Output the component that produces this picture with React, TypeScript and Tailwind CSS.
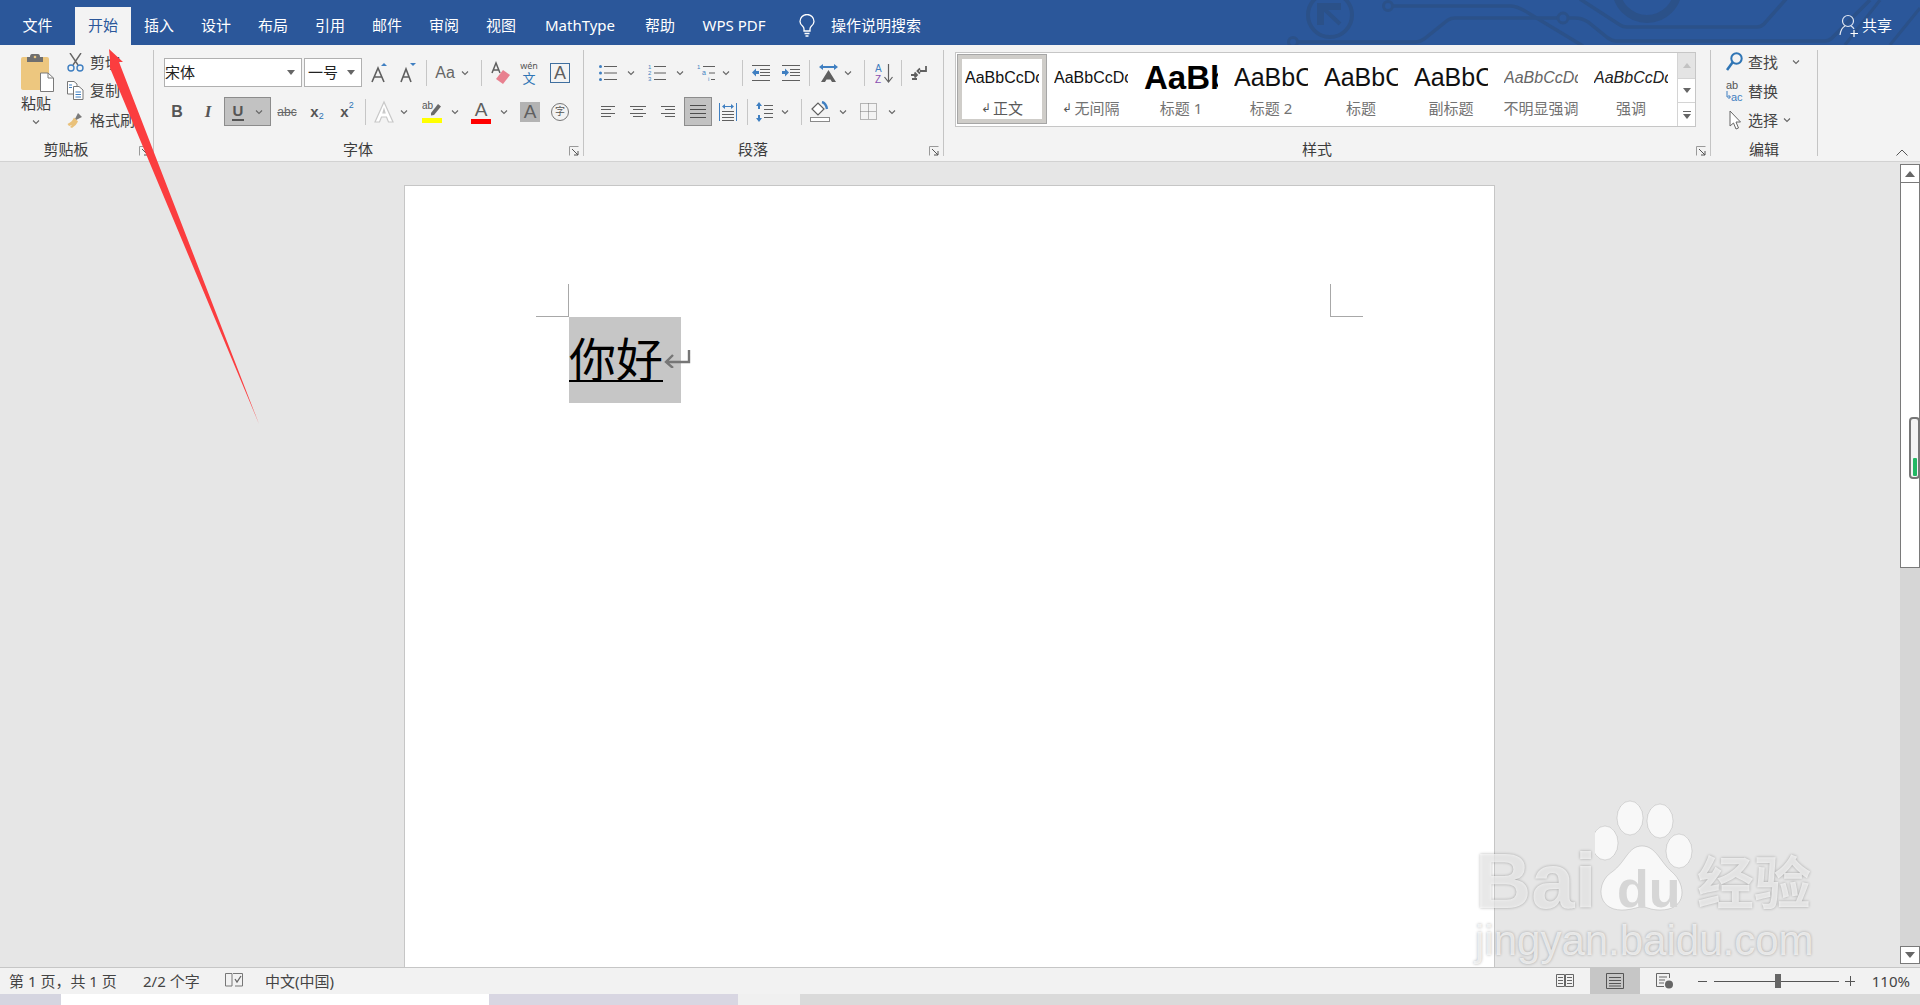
import React from "react";

const G = "#5f5f5f";
const B = "#3f7fc1";

function Chev({ className = "" }: { className?: string }) {
  return (
    <svg width="8" height="6" viewBox="0 0 8 6" className={"shrink-0 " + className}>
      <path d="M1 1.5 L4 4.5 L7 1.5" fill="none" stroke="#666" strokeWidth="1.1" />
    </svg>
  );
}
function Sep({ className = "" }: { className?: string }) {
  return <div className={"w-px h-[26px] bg-[#c6c6c6] shrink-0 " + className} />;
}
function Launcher() {
  return (
    <svg width="10" height="10" viewBox="0 0 10 10" className="absolute right-[4px] top-[7px]">
      <path d="M0.5 9.5 V0.5 H9.5" fill="none" stroke="#9a9a9a" />
      <path d="M3 3 L9 9 M9 5 V9 H5" fill="none" stroke="#555" />
    </svg>
  );
}

function Group({ w, label, labelCls = "pr-[21px]", launcher = true, children }: { w: string; label: string; labelCls?: string; launcher?: boolean; children: React.ReactNode }) {
  return (
    <div className={"mt-[5px] h-[106px] border-r border-[#c4c4c4] flex flex-col shrink-0 " + w}>
      <div className="h-[89px] shrink-0">{children}</div>
      <div className={"relative h-[20px] shrink-0 flex justify-center items-center text-[15px] leading-[20px] text-[#3c3c3c] " + labelCls}>
        {label}
        {launcher && <Launcher />}
      </div>
    </div>
  );
}

function Row({ className = "", children }: { className?: string; children: React.ReactNode }) {
  return <div className={"h-[29px] flex items-center " + className}>{children}</div>;
}

function Lines({ w, ys, x0 = 0, color = G }: { w: number; ys: [number, number, number][]; x0?: number; color?: string }) {
  return (
    <>
      {ys.map(([y, a, b], i) => (
        <path key={i} d={`M${a + x0} ${y + 0.5} H${b + x0}`} stroke={color} strokeWidth="1" fill="none" />
      ))}
    </>
  );
}

function BigA({ size = 22, color = G }: { size?: number; color?: string }) {
  return <span className="font-['Liberation_Sans'] leading-none" style={{ fontSize: size, color }}>A</span>;
}

function StyleItem({ text, cls, label, mark, selected }: { text: string; cls: string; label: string; mark?: boolean; selected?: boolean }) {
  const inner = (
    <div className="h-full flex flex-col items-center">
      <div className="h-[38px] w-[74px] overflow-hidden flex items-center whitespace-nowrap">
        <span className={"font-['Liberation_Sans'] " + cls}>{text}</span>
      </div>
      <div className={"h-[22px] text-[15px] leading-[22px] whitespace-nowrap flex items-center " + (selected ? "text-[#5a5a5a]" : "text-[#737373]")}>
        {mark && <span className="text-[12px] mr-[2px] text-[#555]">↲</span>}
        {label}
      </div>
    </div>
  );
  if (selected) {
    return (
      <div className="w-[90px] h-[70px] mt-[1px] ml-[1px] mr-[-1px] shrink-0 border border-[#a6a6a6] bg-[#cfcdc9] p-[4px]">
        <div className="bg-white h-full">{inner}</div>
      </div>
    );
  }
  return <div className="w-[90px] h-[70px] mt-[1px] pt-[5px] shrink-0">{inner}</div>;
}

export default function App() {
  return (
    <div className="relative w-[1920px] h-[1005px] overflow-hidden flex flex-col bg-[#e6e6e6] text-[#444] [font-family:'Noto_Sans','Noto_Sans_CJK_SC',sans-serif]">
      {/* title bar */}
      <div className="relative h-[45px] shrink-0 bg-[#2b579a] flex text-white text-[15px]">
        <svg className="absolute left-0 top-0" width="1920" height="45" viewBox="0 0 1920 45" fill="none" stroke="#2b5189">
          <circle cx="1330" cy="15" r="22" strokeWidth="4" />
          <path d="M1319 23 V5 H1339 V8 H1322 V23 Z M1322 7 L1340 24" strokeWidth="4" />
          <circle cx="1388" cy="6" r="4.5" strokeWidth="3" />
          <path d="M1392 6 H1510 Q1518 6 1530 14 L1583 46" strokeWidth="3.5" />
          <circle cx="1293" cy="42" r="4.5" strokeWidth="3" />
          <path d="M1297 42 H1416 Q1420 42 1424 39 L1448 20 Q1451 18 1455 18 H1558" strokeWidth="3.5" />
          <circle cx="1563" cy="18" r="5" strokeWidth="3" />
          <path d="M1568 18 H1575 Q1582 18 1588 22 L1608 38 Q1612 41 1616 41 H1825 Q1829 41 1832 38 L1870 0" strokeWidth="3.5" />
          <path d="M1580 -1 L1620 25 Q1623 27 1627 27 H1757 Q1761 27 1764 24 L1786 -1" strokeWidth="3.5" />
          <circle cx="1647" cy="-12" r="31" strokeWidth="8" />
          <path d="M1880 0 L1845 45 M1920 8 L1890 45" strokeWidth="3" />
        </svg>
        <div className="relative flex w-full items-stretch">
          <div className="w-[75px] pt-[5px] flex items-center justify-center">文件</div>
          <div className="w-[56px] mt-[7px] pb-[2px] bg-[#f3f3f3] text-[#2b579a] flex items-center justify-center">开始</div>
          <div className="w-[56px] pt-[5px] flex items-center justify-center">插入</div>
          <div className="w-[58px] pt-[5px] flex items-center justify-center">设计</div>
          <div className="w-[56px] pt-[5px] flex items-center justify-center">布局</div>
          <div className="w-[58px] pt-[5px] flex items-center justify-center">引用</div>
          <div className="w-[56px] pt-[5px] flex items-center justify-center">邮件</div>
          <div className="w-[58px] pt-[5px] flex items-center justify-center">审阅</div>
          <div className="w-[56px] pt-[5px] flex items-center justify-center">视图</div>
          <div className="w-[102px] pt-[5px] flex items-center justify-center">MathType</div>
          <div className="w-[58px] pt-[5px] flex items-center justify-center">帮助</div>
          <div className="w-[90px] pt-[5px] flex items-center justify-center">WPS PDF</div>
          <div className="ml-[20px] pt-[7px] flex items-center">
            <svg width="16" height="24" viewBox="0 0 16 24" fill="none" stroke="#fff" strokeWidth="1.3">
              <path d="M5 17 V15 Q5 13.5 3.5 12 Q1 9.8 1 7.5 A7 7 0 0 1 15 7.5 Q15 9.8 12.5 12 Q11 13.5 11 15 V17 Z" />
              <path d="M5.5 19.5 H10.5 M6.5 22 H9.5" />
            </svg>
          </div>
          <div className="ml-[16px] pt-[5px] flex items-center">操作说明搜索</div>
          <div className="flex-1 pt-[5px] pr-[28px] flex items-center justify-end">
            <svg width="20" height="24" viewBox="0 0 20 24" fill="none" stroke="#dfe6f2" strokeWidth="1.2" className="mr-[3px]">
              <circle cx="9" cy="8" r="5.5" />
              <path d="M1 22 Q2 15 6 13 M12 13 Q14 14 15 16" />
              <path d="M15 17 V24 M11.5 20.5 H19" stroke="#fff" />
            </svg>
            共享
          </div>
        </div>
      </div>

      {/* ribbon */}
      <div className="h-[117px] shrink-0 bg-[#f3f3f3] border-b border-[#d2d2d2] flex">
        {/* clipboard */}
        <Group w="w-[154px]" label="剪贴板">
          <div className="flex">
            <div className="ml-[21px] w-[30px] flex flex-col items-start pt-[3px]">
              <svg width="33" height="39" viewBox="0 0 33 39" className="shrink-0">
                <rect x="0" y="4" width="28" height="33" rx="2" fill="#edc77f" />
                <path d="M9 4 Q9 1 11 1 H17 Q19 1 19 4 H22 V9 H6 V4 Z" fill="#6f6f6f" />
                <circle cx="14" cy="4" r="1.3" fill="#edc77f" />
                <path d="M19.5 20 H27 L32.5 25 V38.5 H19.5 Z" fill="#fff" stroke="#7a7a7a" />
                <path d="M27 20 V25 H32.5" fill="none" stroke="#7a7a7a" />
              </svg>
              <div className="mt-[1px] h-[20px] leading-[20px] text-[15px] text-[#3c3c3c] whitespace-nowrap">粘贴</div>
              <Chev className="ml-[11px] mt-[6px]" />
            </div>
            <div className="ml-[16px] flex flex-col text-[15px] text-[#444] whitespace-nowrap">
              <div className="h-[24px] flex items-center">
                <svg width="17" height="19" viewBox="0 0 17 19" fill="none">
                  <path d="M3 0 L11 12 M14 0 L6 12" stroke="#666" strokeWidth="1.4" />
                  <circle cx="4" cy="15" r="3" stroke={B} strokeWidth="1.4" />
                  <circle cx="13" cy="15" r="3" stroke={B} strokeWidth="1.4" />
                </svg>
                <span className="ml-[6px]">剪切</span>
              </div>
              <div className="h-[24px] mt-[4px] flex items-center">
                <svg width="17" height="19" viewBox="0 0 17 19" fill="none" stroke="#777">
                  <path d="M0.5 0.5 H7 L10 3 V13 H0.5 Z" fill="#fff" />
                  <path d="M6.5 5.5 H12 L16 9 V18.5 H6.5 Z" fill="#fff" />
                  <path d="M8.5 11 H14 M8.5 13.5 H14 M8.5 16 H14 M2 4 H5 M2 6.5 H5" stroke={B} />
                </svg>
                <span className="ml-[6px]">复制</span>
              </div>
              <div className="h-[24px] mt-[6px] flex items-center">
                <svg width="17" height="17" viewBox="0 0 17 17">
                  <path d="M11 1 L15 5 L9 8 L8 7 Z" fill="#7a7a7a" />
                  <path d="M7 5.5 L11 9.5 Q9 14 5 16 L3 15 L5 13 L2 14 L0.5 12 Q5 10 7 5.5 Z" fill="#e9c17a" />
                </svg>
                <span className="ml-[6px]">格式刷</span>
              </div>
            </div>
          </div>
        </Group>

        {/* font */}
        <Group w="w-[430px]" label="字体">
          <div className="pt-[8px] pl-[10px]">
            <Row>
              <div className="w-[138px] h-[29px] shrink-0 bg-white border border-[#b0b0b0] flex items-center justify-between pr-[6px] text-[15px] text-[#222]">
                宋体
                <svg width="8" height="5" viewBox="0 0 8 5"><path d="M0 0 H8 L4 5 Z" fill="#666" /></svg>
              </div>
              <div className="ml-[2px] w-[58px] h-[29px] shrink-0 bg-white border border-[#b0b0b0] flex items-center justify-between pl-[3px] pr-[6px] text-[15px] text-[#222]">
                一号
                <svg width="8" height="5" viewBox="0 0 8 5"><path d="M0 0 H8 L4 5 Z" fill="#666" /></svg>
              </div>
              <svg width="20" height="22" viewBox="0 0 20 22" className="ml-[7px] shrink-0">
                <path d="M3 20 L9 6 L15 20 M5.5 15 H12.5" fill="none" stroke={G} strokeWidth="1.6" />
                <path d="M12 4 L15 1 L18 4 Z" fill={B} />
              </svg>
              <svg width="20" height="22" viewBox="0 0 20 22" className="ml-[9px] shrink-0">
                <path d="M3 20 L8 7 L13 20 M5 15 H11" fill="none" stroke={G} strokeWidth="1.6" />
                <path d="M12 1 L18 1 L15 4 Z" fill={B} />
              </svg>
              <Sep className="ml-[8px]" />
              <span className="ml-[7px] w-[22px] text-center font-['Liberation_Sans'] text-[16px] text-[#666] shrink-0">Aa</span>
              <Chev className="ml-[5px]" />
              <Sep className="ml-[12px]" />
              <svg width="20" height="24" viewBox="0 0 20 24" className="ml-[9px] shrink-0">
                <path d="M1 12 L5 2 L9 12 M2.5 9 H7.5" fill="none" stroke={G} strokeWidth="1.5" />
                <path d="M12 9 L19 14 L12 23 L5 18 Z" fill="#e8808f" />
              </svg>
              <div className="ml-[10px] w-[16px] h-[24px] flex flex-col items-center shrink-0 leading-none">
                <span className="text-[9px] text-[#555] h-[10px]">wén</span>
                <span className="text-[13px] text-[#2f75b5] mt-[1px]">文</span>
              </div>
              <div className="ml-[13px] w-[20px] h-[20px] shrink-0 border border-[#3f6f9f] flex items-center justify-center">
                <BigA size={18} />
              </div>
            </Row>
            <Row className="mt-[10px]">
              <span className="ml-[6px] w-[14px] text-center font-['Liberation_Sans'] font-bold text-[16px] text-[#555] shrink-0">B</span>
              <span className="ml-[17px] w-[14px] text-center font-['Liberation_Serif'] font-bold italic text-[17px] text-[#555] shrink-0">I</span>
              <div className="ml-[9px] w-[47px] h-[29px] shrink-0 bg-[#c2c2c2] border border-[#8c8c8c] flex items-center">
                <span className="ml-[7px] w-[12px] text-center font-['Liberation_Sans'] font-bold text-[15px] leading-[17px] text-[#555] border-b-2 border-[#555]">U</span>
                <Chev className="ml-[11px]" />
              </div>
              <span className="ml-[6px] w-[20px] text-center font-['Liberation_Sans'] text-[12px] text-[#666] line-through shrink-0">abc</span>
              <div className="ml-[10px] w-[20px] shrink-0 flex items-end justify-center font-['Liberation_Sans'] font-bold text-[15px] text-[#555] leading-none">
                x<span className="text-[9px] font-normal text-[#2f75b5] translate-y-[2px]">2</span>
              </div>
              <div className="ml-[10px] w-[20px] shrink-0 flex items-start justify-center font-['Liberation_Sans'] font-bold text-[15px] text-[#555] leading-none">
                x<span className="text-[9px] font-normal text-[#2f75b5] -translate-y-[3px]">2</span>
              </div>
              <Sep className="ml-[8px]" />
              <svg width="22" height="24" viewBox="0 0 22 24" className="ml-[7px] shrink-0">
                <path d="M2 22 L11 2 L20 22 H15.5 L13.5 17 H8.5 L6.5 22 Z M10 13 H12 L11 9.5 Z" fill="#fff" stroke="#c8c8c8" strokeWidth="1.2" />
              </svg>
              <Chev className="ml-[5px]" />
              <svg width="20" height="24" viewBox="0 0 20 24" className="ml-[14px] shrink-0">
                <path d="M9 13 L16 4 L19 6.5 L12 15 L9 15.5 Z" fill="#6a6a6a" />
                <text x="0" y="9" fontSize="10" fill="#555" fontFamily="Liberation Sans">ab</text>
                <rect x="0" y="18" width="20" height="5" fill="#ffff00" />
              </svg>
              <Chev className="ml-[9px]" />
              <div className="ml-[12px] w-[20px] h-[24px] shrink-0 flex flex-col items-center justify-end">
                <BigA size={19} />
                <div className="w-[20px] h-[5px] bg-[#ff0000] shrink-0" />
              </div>
              <Chev className="ml-[9px]" />
              <div className="ml-[12px] w-[20px] h-[20px] shrink-0 bg-[#b3b3b3] flex items-center justify-center">
                <BigA size={19} />
              </div>
              <div className="ml-[11px] w-[18px] h-[18px] shrink-0 rounded-full border border-[#777] flex items-center justify-center text-[10px] text-[#555]">字</div>
            </Row>
          </div>
        </Group>

        {/* paragraph */}
        <Group w="w-[360px]" label="段落">
          <div className="pt-[8px]">
            <Row>
              <svg width="18" height="18" viewBox="0 0 18 18" className="ml-[15px] shrink-0">
                <circle cx="1.5" cy="2.5" r="1.5" fill={B} /><circle cx="1.5" cy="9" r="1.5" fill={B} /><circle cx="1.5" cy="15.5" r="1.5" fill={B} />
                <path d="M5 2.5 H18 M5 9 H18 M5 15.5 H18" stroke={G} />
              </svg>
              <Chev className="ml-[10px]" />
              <svg width="18" height="18" viewBox="0 0 18 18" className="ml-[13px] shrink-0">
                <text x="0" y="5" fontSize="6" fill={B} fontFamily="Liberation Sans">1</text>
                <text x="0" y="11" fontSize="6" fill={B} fontFamily="Liberation Sans">2</text>
                <text x="0" y="17" fontSize="6" fill={B} fontFamily="Liberation Sans">3</text>
                <path d="M6 2.5 H18 M6 9 H18 M6 15.5 H18" stroke={G} />
              </svg>
              <Chev className="ml-[10px]" />
              <svg width="18" height="18" viewBox="0 0 18 18" className="ml-[13px] shrink-0">
                <text x="0" y="5" fontSize="6" fill={B} fontFamily="Liberation Sans">1</text>
                <text x="5" y="11" fontSize="7" fill={B} fontFamily="Liberation Sans">a</text>
                <text x="11" y="17" fontSize="6" fill={B} fontFamily="Liberation Sans">i</text>
                <path d="M6 2.5 H18 M12 9 H18 M14 15.5 H18" stroke={G} />
              </svg>
              <Chev className="ml-[7px]" />
              <Sep className="ml-[12px]" />
              <svg width="18" height="18" viewBox="0 0 18 18" className="ml-[9px] shrink-0">
                <Lines w={18} ys={[[1, 0, 18], [5, 8, 18], [8, 8, 18], [11, 8, 18], [16, 0, 18]]} />
                <path d="M0 8.5 L4 4.5 V7 H7 V10 H4 V12.5 Z" fill={B} />
              </svg>
              <svg width="18" height="18" viewBox="0 0 18 18" className="ml-[12px] shrink-0">
                <Lines w={18} ys={[[1, 0, 18], [5, 8, 18], [8, 8, 18], [11, 8, 18], [16, 0, 18]]} />
                <path d="M7 8.5 L3 4.5 V7 H0 V10 H3 V12.5 Z" fill={B} />
              </svg>
              <Sep className="ml-[9px]" />
              <svg width="19" height="20" viewBox="0 0 19 20" className="ml-[9px] shrink-0">
                <path d="M0 4 L4 1 V3 H15 V1 L19 4 L15 7 V5 H4 V7 Z" fill={B} />
                <path d="M2 19 L9.5 7 L17 19 H13 L11.5 16.5 H7.5 L6 19 Z" fill={G} />
              </svg>
              <Chev className="ml-[6px]" />
              <Sep className="ml-[12px]" />
              <div className="ml-[10px] w-[18px] h-[22px] shrink-0">
                <svg width="18" height="22" viewBox="0 0 18 22">
                  <text x="0" y="10" fontSize="10" fill={B} fontFamily="Liberation Sans">A</text>
                  <text x="0" y="21" fontSize="10" fill="#8a4fb0" fontFamily="Liberation Sans">Z</text>
                  <path d="M13.5 2 V19 M9.5 15 L13.5 20 L17.5 15" fill="none" stroke={G} strokeWidth="1.2" />
                </svg>
              </div>
              <Sep className="ml-[8px]" />
              <svg width="16" height="16" viewBox="0 0 16 16" className="ml-[9px] shrink-0">
                <path d="M15 1 V6 H9 M9 3.5 L6.5 6 L9 8.5" fill="none" stroke={G} strokeWidth="1.8" />
                <path d="M0 10 H6 M3.5 7.5 L6 10 L3.5 12.5 M1 14 H6" fill="none" stroke={G} strokeWidth="1.8" />
              </svg>
            </Row>
            <Row className="mt-[10px]">
              <svg width="14" height="12" viewBox="0 0 14 12" className="ml-[17px] shrink-0"><Lines w={14} ys={[[0, 0, 14], [3, 0, 10], [7, 0, 14], [10, 0, 10]]} /></svg>
              <svg width="16" height="12" viewBox="0 0 16 12" className="ml-[15px] shrink-0"><Lines w={16} ys={[[0, 0, 16], [3, 3, 13], [7, 0, 16], [10, 3, 13]]} /></svg>
              <svg width="14" height="12" viewBox="0 0 14 12" className="ml-[15px] shrink-0"><Lines w={14} ys={[[0, 0, 14], [3, 4, 14], [7, 0, 14], [10, 4, 14]]} /></svg>
              <div className="ml-[9px] w-[28px] h-[29px] shrink-0 bg-[#c2c2c2] border border-[#8c8c8c] flex items-center justify-center">
                <svg width="16" height="14" viewBox="0 0 16 14"><Lines w={16} ys={[[0, 0, 16], [4, 0, 16], [8, 0, 16], [12, 0, 16]]} color="#4d4d4d" /></svg>
              </div>
              <svg width="18" height="20" viewBox="0 0 18 20" className="ml-[7px] shrink-0">
                <path d="M0.5 1 V19 M17.5 1 V19" stroke={B} />
                <path d="M3 4.5 L6 2 V4 H12 V2 L15 4.5 L12 7 V5 H6 V7 Z" fill={B} />
                <Lines w={18} ys={[[9, 3, 15], [12, 3, 15], [15, 3, 15], [18, 3, 15]]} />
              </svg>
              <Sep className="ml-[10px]" />
              <svg width="17" height="20" viewBox="0 0 17 20" className="ml-[8px] shrink-0">
                <path d="M3 0 L6 4 H4 V7 H2 V4 H0 Z M3 20 L6 16 H4 V13 H2 V16 H0 Z" fill={B} />
                <Lines w={17} ys={[[3, 8, 17], [7, 8, 17], [11, 8, 17], [15, 8, 17]]} />
              </svg>
              <Chev className="ml-[8px]" />
              <Sep className="ml-[12px]" />
              <svg width="20" height="21" viewBox="0 0 20 21" className="ml-[8px] shrink-0">
                <path d="M2 8 L8 2 L14 8 L8 14 Z" fill="#fff" stroke={G} strokeWidth="1.2" />
                <path d="M12 1 Q16 2 17 8" fill="none" stroke={B} strokeWidth="2.4" />
                <rect x="0.5" y="16.5" width="19" height="4" fill="#fff" stroke="#8a8a8a" />
              </svg>
              <Chev className="ml-[9px]" />
              <svg width="17" height="17" viewBox="0 0 17 17" className="ml-[13px] shrink-0">
                <path d="M0.5 0.5 H16.5 V16.5 H0.5 Z M8.5 0.5 V16.5 M0.5 8.5 H16.5" fill="none" stroke="#777" strokeDasharray="1 1" />
              </svg>
              <Chev className="ml-[11px]" />
            </Row>
          </div>
        </Group>

        {/* styles */}
        <Group w="w-[767px]" label="样式" labelCls="pr-[20px]">
          <div className="ml-[11px] mt-[2px] w-[741px] h-[75px] bg-white border border-[#c6c6c6] flex">
            <div className="flex flex-1 overflow-hidden">
              <StyleItem selected mark text="AaBbCcDc" cls="text-[16px] text-[#111]" label="正文" />
              <StyleItem mark text="AaBbCcDc" cls="text-[16px] text-[#111]" label="无间隔" />
              <StyleItem text="AaBb" cls="text-[33px] font-bold text-black" label="标题 1" />
              <StyleItem text="AaBbC" cls="text-[25px] text-[#111]" label="标题 2" />
              <StyleItem text="AaBbC" cls="text-[25px] text-[#111]" label="标题" />
              <StyleItem text="AaBbC" cls="text-[25px] text-[#111]" label="副标题" />
              <StyleItem text="AaBbCcDc" cls="text-[16px] italic text-[#666]" label="不明显强调" />
              <StyleItem text="AaBbCcDc" cls="text-[16px] italic text-[#222]" label="强调" />
            </div>
            <div className="w-[18px] shrink-0 border-l border-[#d4d4d4] flex flex-col">
              <div className="h-[25px] bg-[#e4e4e4] flex items-center justify-center">
                <svg width="8" height="5" viewBox="0 0 8 5"><path d="M4 0 L8 5 H0 Z" fill="#c2c2c2" /></svg>
              </div>
              <div className="h-[24px] border-t border-[#d4d4d4] flex items-center justify-center">
                <svg width="8" height="5" viewBox="0 0 8 5"><path d="M0 0 H8 L4 5 Z" fill="#666" /></svg>
              </div>
              <div className="flex-1 border-t border-[#d4d4d4] flex flex-col items-center justify-center">
                <div className="w-[8px] h-px bg-[#666] mb-[2px]" />
                <svg width="8" height="5" viewBox="0 0 8 5"><path d="M0 0 H8 L4 5 Z" fill="#666" /></svg>
              </div>
            </div>
          </div>
        </Group>

        {/* editing */}
        <Group w="w-[107px]" label="编辑" labelCls="" launcher={false}>
          <div className="flex flex-col text-[15px] whitespace-nowrap pl-[15px]">
            <div className="h-[24px] flex items-center">
              <svg width="17" height="20" viewBox="0 0 17 20" fill="none" className="shrink-0">
                <circle cx="10.5" cy="6.5" r="5.2" stroke="#2f75b5" strokeWidth="2" />
                <path d="M6.5 10.5 L1 18" stroke="#2f75b5" strokeWidth="2.6" />
              </svg>
              <span className="ml-[5px]">查找</span>
              <Chev className="ml-[14px]" />
            </div>
            <div className="h-[24px] mt-[5px] flex items-center">
              <svg width="17" height="22" viewBox="0 0 17 22" className="shrink-0">
                <text x="0" y="9" fontSize="11" fill="#555" fontFamily="Liberation Sans">ab</text>
                <text x="5" y="21" fontSize="11" fill={B} fontFamily="Liberation Sans">ac</text>
                <path d="M1 11 V17 H4 M2.5 15 L4.5 17 L2.5 19" fill="none" stroke={B} />
              </svg>
              <span className="ml-[5px]">替换</span>
            </div>
            <div className="h-[24px] mt-[5px] flex items-center">
              <svg width="17" height="20" viewBox="0 0 17 20" className="shrink-0">
                <path d="M4 1 V16 L7.5 13 L10 19 L12.5 18 L10 12 H14.5 Z" fill="#fff" stroke="#666" />
              </svg>
              <span className="ml-[5px]">选择</span>
              <Chev className="ml-[5px]" />
            </div>
          </div>
        </Group>

        <div className="flex-1 flex justify-end items-end pr-[12px] pb-[5px]">
          <svg width="12" height="7" viewBox="0 0 12 7"><path d="M0.5 6.5 L6 1 L11.5 6.5" fill="none" stroke="#555" /></svg>
        </div>
      </div>

      {/* workspace */}
      <div className="flex-1 min-h-0 flex">
        <div className="w-[1900px] shrink-0 pl-[404px] pt-[23px]">
          <div className="relative w-[1091px] h-[782px] bg-white border border-b-0 border-[#c6c6c6] pl-[164px] pt-[131px]">
            <div className="absolute left-[131px] top-[98px] w-[33px] h-[33px] border-r border-b border-[#a8a8a8]" />
            <div className="absolute left-[925px] top-[98px] w-[33px] h-[33px] border-l border-b border-[#a8a8a8]" />
            <div className="w-[112px] h-[86px] bg-[#c6c6c6] flex items-start">
              <span className="mt-[10px] text-[47px] leading-[64px] text-black underline decoration-2 underline-offset-[3px] whitespace-nowrap">你好</span>
              <svg width="28" height="18" viewBox="0 0 28 18" className="mt-[33px] shrink-0" fill="none" stroke="#767676" strokeWidth="2.4">
                <path d="M26 0 V12 H3 M10 5 L3 12 L10 18" />
              </svg>
            </div>
          </div>
        </div>
        <div className="w-[20px] shrink-0 pt-[2px] pb-[3px] flex flex-col">
          <div className="h-[19px] shrink-0 bg-white border border-[#7a7a7a] flex items-center justify-center">
            <svg width="10" height="6" viewBox="0 0 10 6"><path d="M5 0 L10 6 H0 Z" fill="#666" /></svg>
          </div>
          <div className="relative h-[385px] shrink-0 bg-white border-x border-b border-[#7a7a7a]">
            <div className="absolute left-[8px] right-[-1px] top-[234px] h-[62px] rounded-[4px] bg-[#f4f4f4] border-2 border-[#777]" />
            <div className="absolute left-[12px] top-[275px] w-[4px] h-[18px] rounded-[1px] bg-[#22b864]" />
          </div>
          <div className="flex-1 bg-[#d6d6d6]" />
          <div className="h-[18px] shrink-0 bg-white border border-[#7a7a7a] flex items-center justify-center">
            <svg width="10" height="6" viewBox="0 0 10 6"><path d="M0 0 H10 L5 6 Z" fill="#666" /></svg>
          </div>
        </div>
      </div>

      {/* status bar */}
      <div className="h-[27px] shrink-0 bg-[#f2f2f2] border-t border-[#c6c6c6] flex items-center text-[15px] text-[#444] whitespace-nowrap">
        <span className="ml-[9px] w-[134px] shrink-0">第 1 页，共 1 页</span>
        <span className="w-[82px] shrink-0">2/2 个字</span>
        <svg width="18" height="16" viewBox="0 0 18 16" fill="none" stroke="#777" className="shrink-0">
          <path d="M0.5 0.5 H7 V13 H0.5 Z M8 0.5 H17.5 V13 H10" />
          <path d="M10 6 L12 9 L16 3" stroke="#666" strokeWidth="1.3" />
        </svg>
        <span className="ml-[22px]">中文(中国)</span>
        <div className="ml-auto flex items-stretch h-full">
          <div className="w-[50px] flex items-center justify-center">
            <svg width="18" height="16" viewBox="0 0 18 16" fill="none" stroke="#666">
              <path d="M0.5 1.5 H8.5 V13.5 H0.5 Z M9.5 1.5 H17.5 V13.5 H9.5 Z M2 4.5 H7 M2 7.5 H7 M2 10.5 H7 M11 4.5 H16 M11 7.5 H16 M11 10.5 H16" />
            </svg>
          </div>
          <div className="w-[50px] bg-[#c6c6c6] flex items-center justify-center">
            <svg width="18" height="16" viewBox="0 0 18 16" fill="none" stroke="#555">
              <path d="M0.5 0.5 H17.5 V15.5 H0.5 Z M3 4.5 H15 M3 7.5 H15 M3 10.5 H15 M3 13 H15" />
            </svg>
          </div>
          <div className="w-[50px] flex items-center justify-center">
            <svg width="18" height="16" viewBox="0 0 18 16" fill="none" stroke="#666">
              <path d="M0.5 0.5 H13.5 V5 M8 13.5 H0.5 V0.5 M3 4 H11 M3 7 H9 M3 10 H8" />
              <circle cx="13" cy="11.5" r="4" fill="#666" stroke="none" />
            </svg>
          </div>
          <div className="ml-[8px] flex items-center">
            <div className="w-[9px] h-px bg-[#555]" />
            <div className="relative ml-[7px] w-[125px] h-px bg-[#555]">
              <div className="absolute left-[61px] top-[-7px] w-[6px] h-[14px] bg-[#666]" />
            </div>
            <div className="relative ml-[6px] w-[10px] h-[10px]">
              <div className="absolute left-0 top-[5px] w-[10px] h-px bg-[#555]" />
              <div className="absolute left-[5px] top-0 w-px h-[10px] bg-[#555]" />
            </div>
            <span className="ml-[17px] mr-[10px] text-[15px]">110%</span>
          </div>
        </div>
      </div>

      {/* taskbar sliver */}
      <div className="h-[11px] shrink-0 flex overflow-hidden bg-[#d9d9d9]">
        <div className="w-[61px] bg-[#d5d5e0]" />
        <div className="w-[428px] bg-white" />
        <div className="w-[249px] bg-[#d8d6e2]" />
        <div className="w-[62px] bg-[#f0f0f0]" />
        <div className="flex-1 bg-[#dadada] flex justify-end pr-[92px]">
          <span className="mt-[5px] text-[15px] leading-[20px] text-[#222]">11:30</span>
        </div>
      </div>

      {/* Baidu watermark */}
      <div className="absolute left-[1475px] top-[800px] w-[345px] h-[170px] pointer-events-none text-white/70 [text-shadow:0_0_3px_rgba(0,0,0,0.3)]">
        <span className="absolute left-0 top-[36px] text-[78px] leading-[90px] font-bold font-['Liberation_Sans']">Bai</span>
        <svg className="absolute left-[120px] top-0" width="100" height="115" viewBox="1595 800 100 115" fill="#fff" fillOpacity="0.72" stroke="#000" strokeOpacity="0.12">
          <ellipse cx="1630" cy="818" rx="13" ry="17" />
          <ellipse cx="1660" cy="821" rx="13" ry="17" />
          <ellipse cx="1605" cy="843" rx="13" ry="17" />
          <ellipse cx="1679" cy="851" rx="13" ry="17" />
          <path d="M1642 846 C1656 846 1660 862 1672 872 C1686 884 1688 910 1660 910 C1650 910 1648 907 1642 907 C1636 907 1632 910 1622 910 C1596 910 1596 882 1612 872 C1626 862 1628 846 1642 846 Z" />
        </svg>
        <span className="absolute left-[142px] top-[59px] text-[52px] leading-[60px] font-bold font-['Liberation_Sans'] text-[#d6d6d6] [text-shadow:none]">du</span>
        <span className="absolute left-[222px] top-[47px] text-[57px] leading-[70px] font-bold">经验</span>
        <span className="absolute left-0 top-[116px] text-[42px] leading-[50px] font-['Liberation_Sans'] whitespace-nowrap">jingyan.baidu.com</span>
      </div>

      {/* red annotation arrow */}
      <svg className="absolute left-0 top-0 pointer-events-none" width="300" height="440" viewBox="0 0 300 440">
        <polygon points="109,49 123,62 119,62 259,424 110,68 110,60" fill="#fb3d3f" />
      </svg>
    </div>
  );
}
